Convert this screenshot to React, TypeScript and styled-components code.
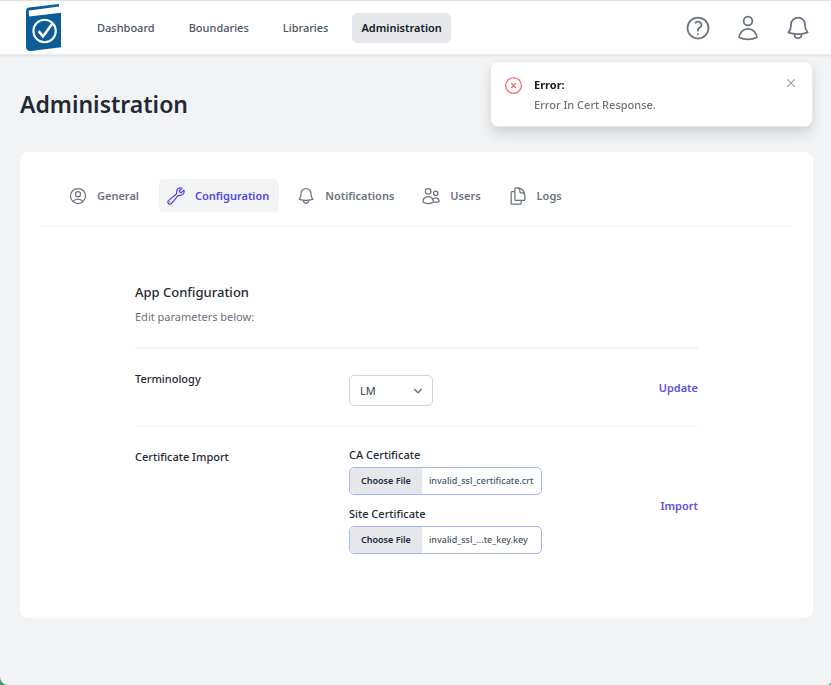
import React, { useId, useState } from "react";
import styled, { createGlobalStyle } from "styled-components";
import {
  HiOutlineBell,
  HiOutlineDocumentDuplicate,
  HiOutlineQuestionMarkCircle,
  HiOutlineUser,
  HiOutlineUserCircle,
  HiOutlineUsers,
  HiOutlineWrench,
  HiOutlineXCircle,
  HiMiniXMark,
} from "react-icons/hi2";

const GlobalStyle = createGlobalStyle`
  *, *::before, *::after { box-sizing: border-box; }
  html { background: #3b9a68; }
  body {
    margin: 0;
    font: 400 11px/16px "Noto Sans", "Open Sans", sans-serif;
    color: #1f2937;
  }
  button, select, input { font: inherit; color: inherit; }
  h1, h2, h3, p { margin: 0; }
`;

const Page = styled.div`
  min-height: 100vh;
  background: #f2f3f5;
  border-radius: 0 0 4px 8px;
`;

const TopBar = styled.header`
  display: flex;
  align-items: center;
  height: 55px;
  padding: 0 19px 0 26px;
  background: #fff;
  border-top: 1px solid #e0e0e0;
  border-bottom: 1px solid #e9eaec;
  box-shadow: 0 1px 2px rgba(0, 0, 0, 0.08);
`;

const LogoLink = styled.a`
  display: flex;
`;

const MainNav = styled.nav`
  display: flex;
  gap: 14px;
  margin-left: 25px;
`;

const NavLink = styled.a<{ $active?: boolean }>`
  padding: ${(p) => (p.$active ? "7px 9px" : "7px 10px")};
  border-radius: 5px;
  text-decoration: none;
  font-weight: ${(p) => (p.$active ? 600 : 500)};
  color: ${(p) => (p.$active ? "#111827" : "#4b5563")};
  background: ${(p) => (p.$active ? "#e5e7eb" : "transparent")};
`;

const HeaderActions = styled.div`
  display: flex;
  gap: 22px;
  margin-left: auto;
`;

const IconButton = styled.button`
  display: flex;
  padding: 0;
  border: 0;
  background: none;
  color: #6b7280;
  cursor: pointer;
`;

const Toast = styled.section`
  position: fixed;
  top: 61px;
  right: 18px;
  width: 323px;
  display: flex;
  align-items: flex-start;
  gap: 10px;
  padding: 13px 13px 13px 12px;
  background: #fff;
  border: 1px solid #e9eaec;
  border-radius: 8px;
  box-shadow: 0 8px 14px rgba(0, 0, 0, 0.1), 0 2px 5px rgba(0, 0, 0, 0.06);

  > svg {
    flex: none;
    color: #f87171;
  }
`;

const ToastBody = styled.div`
  flex: 1;
  padding-top: 2px;
`;

const ToastTitle = styled.h3`
  font-size: 11px;
  font-weight: 700;
  color: #111827;
`;

const ToastText = styled.p`
  margin-top: 4px;
  font-weight: 500;
  color: #6b7280;
`;

const CloseButton = styled(IconButton)`
  color: #9ca3af;
`;

const Main = styled.main`
  padding: 33px 18px 24px 20px;
`;

const Title = styled.h1`
  font-size: 23px;
  line-height: 32px;
  font-weight: 600;
  color: #1f2937;
`;

const Card = styled.section`
  margin-top: 32px;
  padding: 27px 20px 35px;
  background: #fff;
  border-radius: 8px;
`;

const Tabs = styled.nav`
  display: flex;
  gap: 10px;
  padding: 0 21px 14px;
  border-bottom: 1px solid #f3f4f6;
`;

const Tab = styled.button<{ $active?: boolean }>`
  display: flex;
  align-items: center;
  gap: 9px;
  height: 33px;
  padding: 0 10px 0 7px;
  border: 0;
  border-radius: 5px;
  font-weight: 600;
  cursor: pointer;
  color: ${(p) => (p.$active ? "#4f46e5" : "#6b7280")};
  background: ${(p) => (p.$active ? "#f3f4f6" : "transparent")};
`;

const Settings = styled.div`
  padding: 55px 95px 0;
`;

const SectionHeader = styled.header`
  padding-bottom: 22px;
  border-bottom: 2px solid #f3f4f6;
`;

const SectionTitle = styled.h2`
  font-size: 13px;
  line-height: 20px;
  font-weight: 500;
`;

const SectionText = styled.p`
  margin-top: 7px;
  color: #6b7280;
`;

const SettingRow = styled.form`
  display: grid;
  grid-template-columns: 38% 1fr auto;
  padding: 20px 0 19px;

  & + & {
    border-top: 2px solid #fafafa;
  }
`;

const SettingName = styled.h3`
  margin-top: 2px;
  font-size: 11px;
  font-weight: 500;
`;

const Field = styled.div`
  display: flex;
  flex-direction: column;
  align-items: flex-start;
`;

const FileFields = styled(Field)`
  gap: 11px;
  padding-bottom: 10px;
`;

const SelectBox = styled.div`
  display: grid;
  align-items: center;
  width: 84px;
  margin-top: 6px;

  > * {
    grid-area: 1 / 1;
  }

  > svg {
    justify-self: end;
    margin-right: 10px;
    pointer-events: none;
  }
`;

const Select = styled.select`
  appearance: none;
  width: 100%;
  height: 31px;
  padding: 0 24px 0 10px;
  border: 1px solid #d1d5db;
  border-radius: 5px;
  background: #fff;
  color: #374151;
`;

const FileField = styled.div`
  display: flex;
  flex-direction: column;
  gap: 4px;
`;

const FieldLabel = styled.label`
  font-weight: 500;
`;

const FileBox = styled.div`
  position: relative;
  display: flex;
  align-items: stretch;
  width: 193px;
  height: 28px;
  border: 1px solid #a5b4fc;
  border-radius: 5px;
  overflow: hidden;
  font-size: 9px;
  line-height: 26px;
`;

const FileButton = styled.span`
  padding: 0 10px;
  width: 72px;
  text-align: center;
  white-space: nowrap;
  font-weight: 600;
  background: #e5e7eb;
  color: #1f2937;
`;

const FileName = styled.span`
  padding-left: 7px;
  white-space: nowrap;
  font-weight: 500;
  color: #4b5563;
`;

const FileInput = styled.input`
  position: absolute;
  inset: 0;
  width: 100%;
  opacity: 0;
  cursor: pointer;
`;

const TextButton = styled.button`
  align-self: center;
  padding: 0;
  border: 0;
  background: none;
  font-weight: 600;
  color: #5b50e0;
  cursor: pointer;
`;

function Logo() {
  return (
    <svg width="36" height="48" viewBox="0 0 36 48" role="img" aria-label="Home">
      <path
        fill="#0b5c97"
        d="M3 3.4 L33 0 V2.6 L3.3 6.6 Q2.6 6.7 2.7 7.5 L3.2 12.6 L35 8.8 V43.2 L5 47 Q0 47.4 0 42.6 V7 Q0 3.8 3 3.4Z"
      />
      <g fill="none" stroke="#fff" strokeWidth="2.1">
        <circle cx="18.6" cy="27" r="11.2" />
        <path d="M12.6 27.2 L17 32.4 L26.4 19.4" strokeWidth="2.6" />
      </g>
    </svg>
  );
}

function Chevron() {
  return (
    <svg width="10" height="10" viewBox="0 0 10 10" aria-hidden="true">
      <path d="M1.2 3 L5 6.8 L8.8 3" fill="none" stroke="#6b7280" strokeWidth="1.5" />
    </svg>
  );
}

function shorten(name: string) {
  return name.length > 27 ? `${name.slice(0, 12)}...${name.slice(-10)}` : name;
}

function FilePicker({ label, initial }: { label: string; initial: string }) {
  const id = useId();
  const [name, setName] = useState(initial);
  return (
    <FileField>
      <FieldLabel htmlFor={id}>{label}</FieldLabel>
      <FileBox>
        <FileButton>Choose File</FileButton>
        <FileName>{shorten(name)}</FileName>
        <FileInput
          id={id}
          type="file"
          onChange={(e) => setName(e.target.files?.[0]?.name ?? initial)}
        />
      </FileBox>
    </FileField>
  );
}

const navItems = ["Dashboard", "Boundaries", "Libraries", "Administration"];

const tabs = [
  { name: "General", Icon: HiOutlineUserCircle },
  { name: "Configuration", Icon: HiOutlineWrench },
  { name: "Notifications", Icon: HiOutlineBell },
  { name: "Users", Icon: HiOutlineUsers },
  { name: "Logs", Icon: HiOutlineDocumentDuplicate },
];

export default function App() {
  const [tab, setTab] = useState("Configuration");
  const [toastOpen, setToastOpen] = useState(true);

  return (
    <>
      <GlobalStyle />
      <Page>
        <TopBar>
          <LogoLink href="#home">
            <Logo />
          </LogoLink>
          <MainNav>
            {navItems.map((item) => (
              <NavLink key={item} href={`#${item.toLowerCase()}`} $active={item === "Administration"}>
                {item}
              </NavLink>
            ))}
          </MainNav>
          <HeaderActions>
            <IconButton type="button" aria-label="Help">
              <HiOutlineQuestionMarkCircle size={28} />
            </IconButton>
            <IconButton type="button" aria-label="Account">
              <HiOutlineUser size={28} />
            </IconButton>
            <IconButton type="button" aria-label="Notifications">
              <HiOutlineBell size={28} />
            </IconButton>
          </HeaderActions>
        </TopBar>

        <Main>
          <Title>Administration</Title>
          <Card>
            <Tabs>
              {tabs.map(({ name, Icon }) => (
                <Tab key={name} type="button" $active={name === tab} onClick={() => setTab(name)}>
                  <Icon size={20} />
                  {name}
                </Tab>
              ))}
            </Tabs>
            <Settings>
              <SectionHeader>
                <SectionTitle>App Configuration</SectionTitle>
                <SectionText>Edit parameters below:</SectionText>
              </SectionHeader>
              <SettingRow onSubmit={(e) => e.preventDefault()}>
                <SettingName>Terminology</SettingName>
                <Field>
                  <SelectBox>
                    <Select aria-label="Terminology" defaultValue="LM">
                      <option>LM</option>
                    </Select>
                    <Chevron />
                  </SelectBox>
                </Field>
                <TextButton>Update</TextButton>
              </SettingRow>
              <SettingRow onSubmit={(e) => e.preventDefault()}>
                <SettingName>Certificate Import</SettingName>
                <FileFields>
                  <FilePicker label="CA Certificate" initial="invalid_ssl_certificate.crt" />
                  <FilePicker label="Site Certificate" initial="invalid_ssl_certificate_key.key" />
                </FileFields>
                <TextButton>Import</TextButton>
              </SettingRow>
            </Settings>
          </Card>
        </Main>
      </Page>

      {toastOpen && (
        <Toast role="alert">
          <HiOutlineXCircle size={21} />
          <ToastBody>
            <ToastTitle>Error:</ToastTitle>
            <ToastText>Error In Cert Response.</ToastText>
          </ToastBody>
          <CloseButton type="button" aria-label="Close" onClick={() => setToastOpen(false)}>
            <HiMiniXMark size={16} />
          </CloseButton>
        </Toast>
      )}
    </>
  );
}
